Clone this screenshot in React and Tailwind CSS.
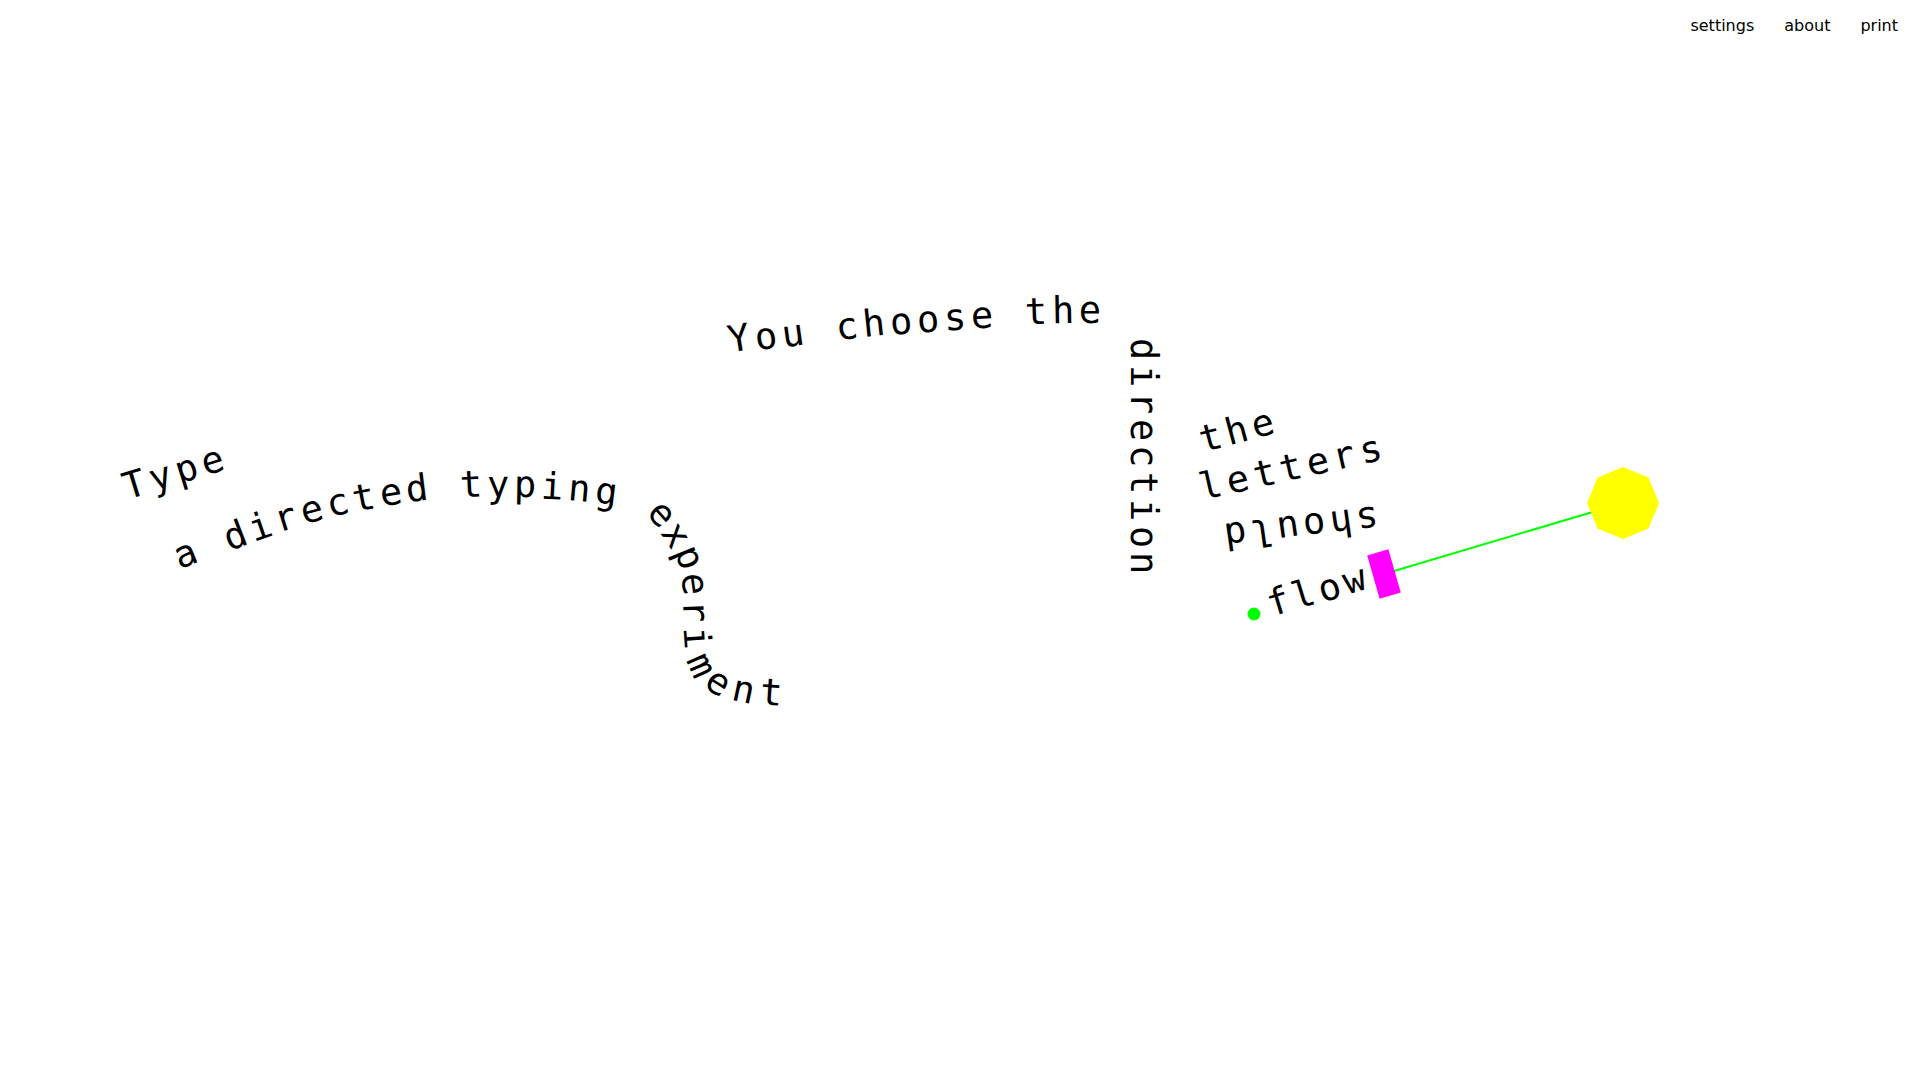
import React from "react";

// each glyph: [char, x, y, deg] — x/y is the centre of the glyph's x-height band
const glyphs = [
  // Type
  ["T", 135, 487, -17],
  ["y", 161, 479, -17],
  ["p", 187, 471, -17],
  ["e", 213, 463, -17],
  // a directed typing experiment
  ["a", 186, 556, -22],
  ["d", 236, 538, -21],
  ["i", 261, 529, -19],
  ["r", 286, 520, -17],
  ["e", 312, 512, -15],
  ["c", 338, 505, -13],
  ["t", 364, 500, -11],
  ["e", 391, 495, -9],
  ["d", 417, 491, -7],
  ["t", 471, 487, -3],
  ["y", 498, 487, -1],
  ["p", 525, 487, 1],
  ["i", 552, 489, 3],
  ["n", 579, 491, 5],
  ["g", 606, 494, 7],
  ["e", 660, 515, 48],
  ["x", 674, 536, 56],
  ["p", 687, 558, 68],
  ["e", 692, 584, 82],
  ["r", 693, 611, 88],
  ["i", 694, 638, 86],
  ["m", 699, 666, 66],
  ["e", 717, 684, 32],
  ["n", 743, 692, 12],
  ["t", 771, 695, 4],
  // You choose the
  ["Y", 739, 341, -9],
  ["o", 766, 339, -9],
  ["u", 793, 336, -8],
  ["c", 847, 329, -7],
  ["h", 874, 326, -6],
  ["o", 901, 324, -5],
  ["o", 928, 322, -4],
  ["s", 955, 320, -4],
  ["e", 982, 318, -3],
  ["t", 1036, 314, -2],
  ["h", 1063, 313, -1],
  ["e", 1090, 313, 0],
  // the
  ["t", 1211, 440, -15],
  ["h", 1237, 433, -15],
  ["e", 1263, 426, -15],
  // letters
  ["l", 1211, 488, -13],
  ["e", 1238, 482, -13],
  ["t", 1265, 476, -13],
  ["t", 1291, 470, -13],
  ["e", 1318, 464, -13],
  ["r", 1344, 458, -13],
  ["s", 1371, 452, -13],
  // should (upside down)
  ["s", 1367, 517, 172],
  ["h", 1341, 520, 172],
  ["o", 1314, 523, 172],
  ["u", 1288, 526, 172],
  ["l", 1261, 529, 172],
  ["d", 1235, 532, 172],
  // flow
  ["f", 1279, 604, -17],
  ["l", 1304, 597, -17],
  ["o", 1330, 590, -17],
  ["w", 1355, 582, -17],
];

const direction = "direction".split("").map((c, i) => [c, 1141, 349.5 + i * 26.75, 90]);

const octagon = Array.from({ length: 8 }, (_, i) => {
  const a = (i * Math.PI) / 4;
  return `${1623 + 36 * Math.cos(a)},${503 + 36 * Math.sin(a)}`;
}).join(" ");

function Glyph({ c, x, y, deg }) {
  // anchor = half advance (0.301em) and x-height middle (0.5735em) at 37px
  return (
    <span
      className="absolute block text-[37px] leading-none text-black select-none"
      style={{
        left: x - 11.14,
        top: y - 21.22,
        transform: `rotate(${deg}deg)`,
        transformOrigin: "11.14px 21.22px",
      }}
    >
      {c}
    </span>
  );
}

export default function App() {
  return (
    <div className="relative w-full h-[1076px] overflow-hidden bg-white">
      <nav className="relative z-10 flex justify-end gap-[30px] pt-[14px] pr-[18px] text-base leading-6 text-black font-['DejaVu_Sans',sans-serif]">
        <a href="#settings">settings</a>
        <a href="#about">about</a>
        <a href="#print">print</a>
      </nav>

      <svg className="absolute inset-0" width="1916" height="1076" viewBox="0 0 1916 1076">
        <line x1="1384" y1="574" x2="1623" y2="503" stroke="#00ff00" strokeWidth="2" />
        <polygon points={octagon} fill="#ffff00" />
        <rect x="1373" y="551.5" width="22" height="45" fill="#ff00ff" transform="rotate(-16 1384 574)" />
        <circle cx="1254" cy="614" r="6.5" fill="#00ff00" />
      </svg>

      <div className="absolute inset-0 font-['DejaVu_Sans_Mono',monospace]">
        {[...glyphs, ...direction].map(([c, x, y, deg], i) => (
          <Glyph key={i} c={c} x={x} y={y} deg={deg} />
        ))}
      </div>
    </div>
  );
}
